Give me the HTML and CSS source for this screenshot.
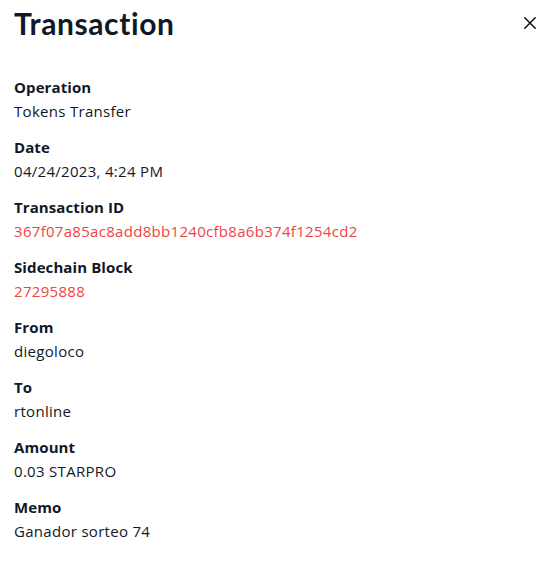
FILE: index.html
```html
<!DOCTYPE html>
<html>
<head>
<meta charset="utf-8">
<link rel="stylesheet" href="styles.css">
</head>
<body>
<div class="panel">
  <header class="head">
    <h1 class="title">Transaction</h1>
    <button class="close" aria-label="Close">
      <svg width="12" height="12" viewBox="0 0 12 12"><path d="M0.8 0.8L11.2 11.2M11.2 0.8L0.8 11.2" stroke="#111" stroke-width="1.5" stroke-linecap="round"/></svg>
    </button>
  </header>
  <dl class="list">
    <div class="item"><dt>Operation</dt><dd>Tokens Transfer</dd></div>
    <div class="item"><dt>Date</dt><dd>04/24/2023, 4:24 PM</dd></div>
    <div class="item"><dt>Transaction ID</dt><dd class="link">367f07a85ac8add8bb1240cfb8a6b374f1254cd2</dd></div>
    <div class="item"><dt>Sidechain Block</dt><dd class="link">27295888</dd></div>
    <div class="item"><dt>From</dt><dd>diegoloco</dd></div>
    <div class="item"><dt>To</dt><dd>rtonline</dd></div>
    <div class="item"><dt>Amount</dt><dd>0.03 STARPRO</dd></div>
    <div class="item"><dt>Memo</dt><dd>Ganador sorteo 74</dd></div>
  </dl>
</div>
</body>
</html>
```
FILE: styles.css
```css
* { box-sizing: border-box; }
html, body { margin: 0; padding: 0; background: #fff; }
body { font-family: "Open Sans", "Noto Sans", sans-serif; color: #111827; }
.panel { padding: 5px 14px 0 14px; }
.head { display: flex; justify-content: space-between; align-items: center; height: 36px; }
.title { margin: 0; font-family: "Lato", "Open Sans", sans-serif; font-size: 30px; line-height: 36px; font-weight: 700; letter-spacing: 0.6px; color: #111827; }
.close { border: 0; background: none; padding: 0; width: 12px; height: 12px; margin-right: 4px; display: flex; }
.list { margin: 35px 0 0 0; }
.item { margin-bottom: 13px; }
dt { font-weight: 700; font-size: 15px; line-height: 23px; letter-spacing: 0.1px; }
dd { margin: 0; font-size: 15px; line-height: 24px; letter-spacing: 0.3px; }
.link { color: #ef4444; }
```
